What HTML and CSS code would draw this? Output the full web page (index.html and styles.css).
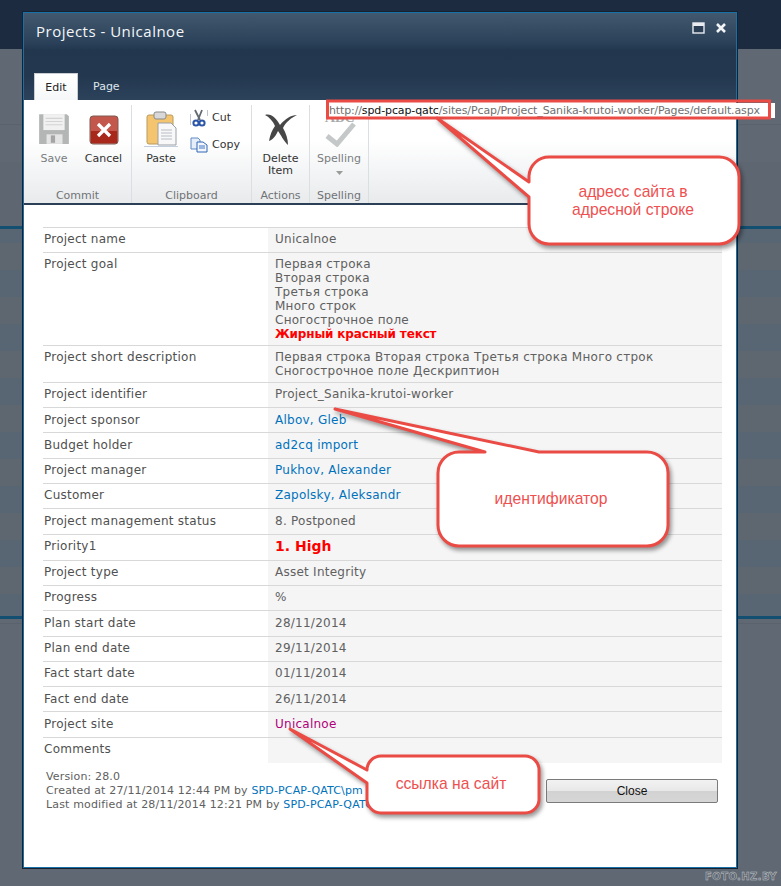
FILE: index.html
```html
<!DOCTYPE html>
<html lang="ru">
<head>
<meta charset="utf-8">
<title>Projects - Unicalnoe</title>
<link rel="stylesheet" href="styles.css">
</head>
<body>
<div class="page">
  <div class="dialog">
    <header class="titlebar">
      <div class="titlerow">
        <h1 class="title">Projects - Unicalnoe</h1>
        <div class="winbtns">
          <svg width="13" height="12" viewBox="0 0 13 12"><rect x="1" y="1" width="11" height="10" fill="#2a3f55" stroke="#e8ecf0" stroke-width="1.4"/><rect x="1" y="1" width="11" height="3" fill="#e8ecf0"/></svg>
          <svg width="12" height="12" viewBox="0 0 12 12"><path d="M2 2l8 8M10 2l-8 8" stroke="#f2f4f6" stroke-width="2.6"/></svg>
        </div>
      </div>
      <div class="tabs">
        <div class="tab active">Edit</div>
        <div class="tab">Page</div>
      </div>
    </header>
    <div class="ribbon">
      <section class="group g-commit">
        <div class="tools">
          <div class="big w-save">
            <svg class="ico" width="34" height="36" viewBox="0 0 32 32"><path d="M2 2h26l2 2v26H2z" fill="#b4b6b6"/><rect x="6" y="2" width="20" height="15" fill="#f1f1f1"/><path d="M8 6h16M8 9h16M8 12h16" stroke="#d4d4d4"/><rect x="9" y="21" width="15" height="9" fill="#e4e4e4"/><rect x="13" y="22" width="4" height="7" fill="#a5a5a5"/></svg>
            <span class="lbl dim">Save</span>
          </div>
          <div class="big w-cancel">
            <svg class="ico" width="30" height="36" viewBox="0 -2 30 32"><rect x="1" y="1" width="28" height="28" rx="3" fill="#c4574c" stroke="#7c5a52"/><rect x="2" y="16" width="26" height="12" fill="#a9281c"/><path d="M9 9l12 12M21 9L9 21" stroke="#fff" stroke-width="3.2"/></svg>
            <span class="lbl">Cancel</span>
          </div>
        </div>
        <div class="glabel">Commit</div>
      </section>
      <section class="group g-clip">
        <div class="tools">
          <div class="big w-paste">
            <svg class="ico" width="34" height="36" viewBox="0 0 34 36"><rect x="3" y="4" width="26" height="29" rx="2" fill="#f4c56e" stroke="#b99a5e"/><rect x="10" y="1" width="12" height="7" rx="2" fill="#d8d8d8" stroke="#8b8b8b"/><path d="M14 12h13l5 5v17H14z" fill="#f8f8f8" stroke="#9aa0a8"/><path d="M17 19h11M17 22h11M17 25h11M17 28h11" stroke="#b6bcc4"/><path d="M0 35.500h34" stroke="#c4cedc"/></svg>
            <span class="lbl">Paste</span>
          </div>
          <div class="small-col">
            <div class="small">
              <svg width="18" height="18" viewBox="0 0 18 18"><path d="M.5 5v11M17.500 1v6" stroke="#bcc4d0"/><path d="M5 1l5 10M12 1L8 11" stroke="#646a72" stroke-width="1.8"/><circle cx="6" cy="14" r="2.600" fill="none" stroke="#2b55a8" stroke-width="2"/><circle cx="12" cy="14" r="2.600" fill="none" stroke="#2b55a8" stroke-width="2"/></svg>
              <span class="lbl">Cut</span>
            </div>
            <div class="small">
              <svg width="18" height="16" viewBox="0 0 18 16"><path d="M1 1h7l2 2v9H1z" fill="#e6eefa" stroke="#5f8ac4"/><path d="M7 5h6l4 3v7H7z" fill="#f3f7fd" stroke="#2f66b4"/><path d="M9 9h6M9 11h6" stroke="#3f76c4"/></svg>
              <span class="lbl">Copy</span>
            </div>
          </div>
        </div>
        <div class="glabel">Clipboard</div>
      </section>
      <section class="group g-actions">
        <div class="tools">
          <div class="big w-del">
            <svg class="ico" width="34" height="36" viewBox="0 0 34 34"><path d="M1 3c6-2 11 3 15 10C21 7 27 3 33 3c-6 3-11 7-14 13 3 5 5 11 5 17-5-5-7-10-10-14-2 4-4 8-9 10 1-6 3-11 6-15C9 9 5 5 1 3z" fill="#474747"/></svg>
            <span class="lbl">Delete<br>Item</span>
          </div>
        </div>
        <div class="glabel">Actions</div>
      </section>
      <section class="group g-spell">
        <div class="tools">
          <div class="big w-spell">
            <svg class="ico" width="36" height="36" viewBox="0 0 36 36"><text class="abc" x="4" y="11">ABC</text><path d="M6 25l10 8L33 13" fill="none" stroke="#c5c8c9" stroke-width="5"/></svg>
            <span class="lbl dim">Spelling</span>
            <svg class="drop" width="7" height="4" viewBox="0 0 7 4"><path d="M0 0h7L3.500 4z" fill="#9a9a9a"/></svg>
          </div>
        </div>
        <div class="glabel">Spelling</div>
      </section>
    </div>
    <main class="content">
      <table class="props">
        <tr><th>Project name</th><td>Unicalnoe</td></tr>
        <tr class="multi"><th>Project goal</th><td>Первая строка<br>Вторая строка<br>Третья строка<br>Много строк<br>Сногострочное поле<br><b class="alert">Жирный красный текст</b></td></tr>
        <tr class="multi"><th>Project short description</th><td>Первая строка Вторая строка Третья строка Много строк<br>Сногострочное поле Дескриптион</td></tr>
        <tr><th>Project identifier</th><td>Project_Sanika-krutoi-worker</td></tr>
        <tr class="low"><th>Project sponsor</th><td><a href="#">Albov, Gleb</a></td></tr>
        <tr class="r26 low"><th>Budget holder</th><td><a href="#">ad2cq import</a></td></tr>
        <tr><th>Project manager</th><td><a href="#">Pukhov, Alexander</a></td></tr>
        <tr><th>Customer</th><td><a href="#">Zapolsky, Aleksandr</a></td></tr>
        <tr class="r26 low"><th>Project management status</th><td>8. Postponed</td></tr>
        <tr class="r26"><th>Priority1</th><td><b class="alert big-alert">1. High</b></td></tr>
        <tr><th>Project type</th><td>Asset Integrity</td></tr>
        <tr><th>Progress</th><td>%</td></tr>
        <tr class="r26 low"><th>Plan start date</th><td>28/11/2014</td></tr>
        <tr><th>Plan end date</th><td>29/11/2014</td></tr>
        <tr><th>Fact start date</th><td>01/11/2014</td></tr>
        <tr class="low"><th>Fact end date</th><td>26/11/2014</td></tr>
        <tr class="r26 low"><th>Project site</th><td><a class="visited" href="#">Unicalnoe</a></td></tr>
        <tr><th>Comments</th><td></td></tr>
      </table>
      <div class="foot">
        <p class="meta">Version: 28.0<br>Created at 27/11/2014 12:44 PM by <a href="#">SPD-PCAP-QATC\pm</a><br>Last modified at 28/11/2014 12:21 PM by <a href="#">SPD-PCAP-QATC</a></p>
        <button class="close" type="button">Close</button>
      </div>
    </main>
  </div>

  <div class="address"><span class="gray">http://</span>spd-pcap-qatc<span class="gray">/sites/Pcap/Project_Sanika-krutoi-worker/Pages/default.aspx</span></div>

  <svg class="marks" width="781" height="886" viewBox="0 0 781 886">
    <rect class="box" x="327.500" y="101" width="442" height="17"/>
    <path class="call" d="M437 118L529 182V176A20 20 0 0 1 549 157H719A20 20 0 0 1 739 177V224A20 20 0 0 1 719 244H549A20 20 0 0 1 529 224V197Z"/>
    <text class="note" x="633" y="197">адресс сайта в</text>
    <text class="note" x="633" y="215">адресной строке</text>
    <path class="call" d="M335 409L485 452H459A21 21 0 0 0 438 473V525A21 21 0 0 0 459 546H647A21 21 0 0 0 668 525V473A21 21 0 0 0 647 452H539Z"/>
    <text class="note" x="551" y="504">идентификатор</text>
    <path class="call" d="M290 729L367 770A14 14 0 0 1 381 756H525A14 14 0 0 1 539 770V798A14 14 0 0 1 525 813H381A14 14 0 0 1 367 798V783Z"/>
    <text class="note" x="451" y="789">ссылка на сайт</text>
  </svg>

  <div class="wm">FOTO.HZ.BY</div>
</div>
</body>
</html>
```
FILE: styles.css
```css
* { box-sizing: border-box; }
html, body { margin: 0; padding: 0; }
body { width: 781px; height: 886px; overflow: hidden; }
.page {
  position: relative;
  width: 781px;
  height: 886px;
  padding: 12px 0 0 23px;
  overflow: hidden;
  background:
    linear-gradient(#1c2b40 0 49px, #5f6873 49px 124px, #59626d 124px 125px, #5f6873 125px 162px, #5d6671 162px 226px, #124f70 226px 229px, transparent 229px 616px, #124f70 616px 619px, #5f6873 619px 623px, #59626d 623px 624px, #5f6873 624px),
    repeating-linear-gradient(#586573 0 27px, #5e6770 27px 54px);
}
.dialog {
  width: 714px;
  height: 856px;
  display: flex;
  flex-direction: column;
  background: #fff;
  border: 1px solid #1870a8;
  box-shadow: 0 0 0 1px #16222f;
}
.titlebar {
  height: 87px;
  flex: none;
  display: flex;
  flex-direction: column;
  justify-content: space-between;
  background: linear-gradient(#41586e, #2a4159 30px, #22374e 37px, #23384f 62px, #2c425b 87px);
}
.titlerow { display: flex; justify-content: space-between; padding: 7px 9px 0 12px; }
.title { margin: 0; font: 400 15px/22px "Open Sans", sans-serif; color: #f4f6f8; letter-spacing: .5px; }
.winbtns { display: flex; gap: 10px; padding-top: 2px; }
.tabs { display: flex; padding-left: 10px; gap: 1px; }
.tab { height: 27px; padding: 7px 14px 0; font: 11px/14px "DejaVu Sans", sans-serif; color: #dfe6ec; }
.tab.active { width: 44px; padding: 7px 0 0; text-align: center; color: #222; background: linear-gradient(#fff, #f6f7f8); border: 1px solid #c9ccd0; border-bottom: 0; }
.ribbon {
  height: 105px;
  flex: none;
  display: flex;
  padding-top: 5px;
  background: linear-gradient(#fff 0, #fff 40px, #e9ebed 100px);
  border-bottom: 2px solid #2b4056;
}
.group { display: flex; flex-direction: column; justify-content: space-between; border-right: 1px solid #dcdfe1; }
.g-commit { width: 108px; }
.g-clip { width: 120px; }
.g-actions { width: 58px; }
.g-spell { width: 59px; }
.tools { display: flex; }
.glabel { text-align: center; font: 11px/14px "DejaVu Sans", sans-serif; color: #707376; }
.big { display: flex; flex-direction: column; align-items: center; font: 11px/12px "DejaVu Sans", sans-serif; }
.ico { display: block; height: 36px; margin: 6px 0; }
.w-save { width: 58px; padding-left: 2px; }
.w-cancel { width: 43px; }
.w-paste { width: 58px; }
.w-del { width: 58px; text-align: center; }
.w-spell { width: 59px; }
.lbl { color: #333; font: 11px/12px "DejaVu Sans", sans-serif; text-align: center; }
.lbl.dim { color: #7a7d80; }
.drop { margin-top: 6px; }
.abc { font: 700 14px "Liberation Serif", serif; fill: #a9abad; }
.small-col { display: flex; flex-direction: column; gap: 8px; padding-top: 3px; }
.small { display: flex; align-items: center; gap: 4px; height: 19px; }
.content { flex: 1; padding: 22px 14px 0 19px; }
.props { width: 679px; border-collapse: collapse; table-layout: fixed; font: 12px/14px "DejaVu Sans", sans-serif; letter-spacing: .25px; }
.props tr { height: 25px; }
.props tr.r26 { height: 26px; }
.props th, .props td { padding: 4px 7px 4px 1px; border-top: 1px solid #d8d8d8; text-align: left; vertical-align: top; font-weight: 400; }
.props .low th, .props .low td { padding-top: 5px; }
.props th { width: 225px; color: #505050; }
.props td { background: #f5f5f5; color: #606060; padding-left: 7px; }
.props a { color: #0072bc; text-decoration: none; }
.props a.visited { color: #b0007a; }
.alert { color: #f00; font-weight: 700; letter-spacing: -.15px; }
.big-alert { font-size: 14px; letter-spacing: 0; }
.foot { display: flex; justify-content: space-between; padding: 7px 4px 0 3px; }
.meta { margin: 0; font: 11px/14px "DejaVu Sans", sans-serif; letter-spacing: .15px; color: #606060; }
.meta a { color: #0072bc; text-decoration: none; }
.close {
  width: 172px;
  height: 24px;
  margin-top: 9px;
  padding: 0;
  font: 12px/20px "Liberation Sans", sans-serif;
  color: #111;
  border: 1px solid #7a7a7a;
  border-radius: 2px;
  background: linear-gradient(#f2f2f2, #e8e8e8 50%, #d2d2d2 50%, #d6d6d6);
}
.address {
  position: absolute;
  left: 326px;
  top: 103px;
  width: 449px;
  height: 15px;
  padding-left: 3px;
  background: #fff;
  white-space: nowrap;
  font: 11px/15px "DejaVu Sans", sans-serif;
  letter-spacing: -.12px;
  color: #111;
}
.gray { color: #707070; }
.marks { position: absolute; left: 0; top: 0; pointer-events: none; }
.box { fill: none; stroke: #ea4b45; stroke-width: 3; }
.call { fill: #fff; stroke: #ea4b45; stroke-width: 3; stroke-linejoin: round; filter: drop-shadow(2px 3px 2px rgba(0,0,0,.4)); }
.note { font: 15.700px "Liberation Sans", sans-serif; fill: #ee5050; text-anchor: middle; }
.wm {
  position: absolute;
  right: 4px;
  bottom: 3px;
  font: 700 10px/12px "DejaVu Sans", sans-serif;
  letter-spacing: .4px;
  color: #59626d;
  -webkit-text-stroke: .5px #c6c9cc;
}
```
